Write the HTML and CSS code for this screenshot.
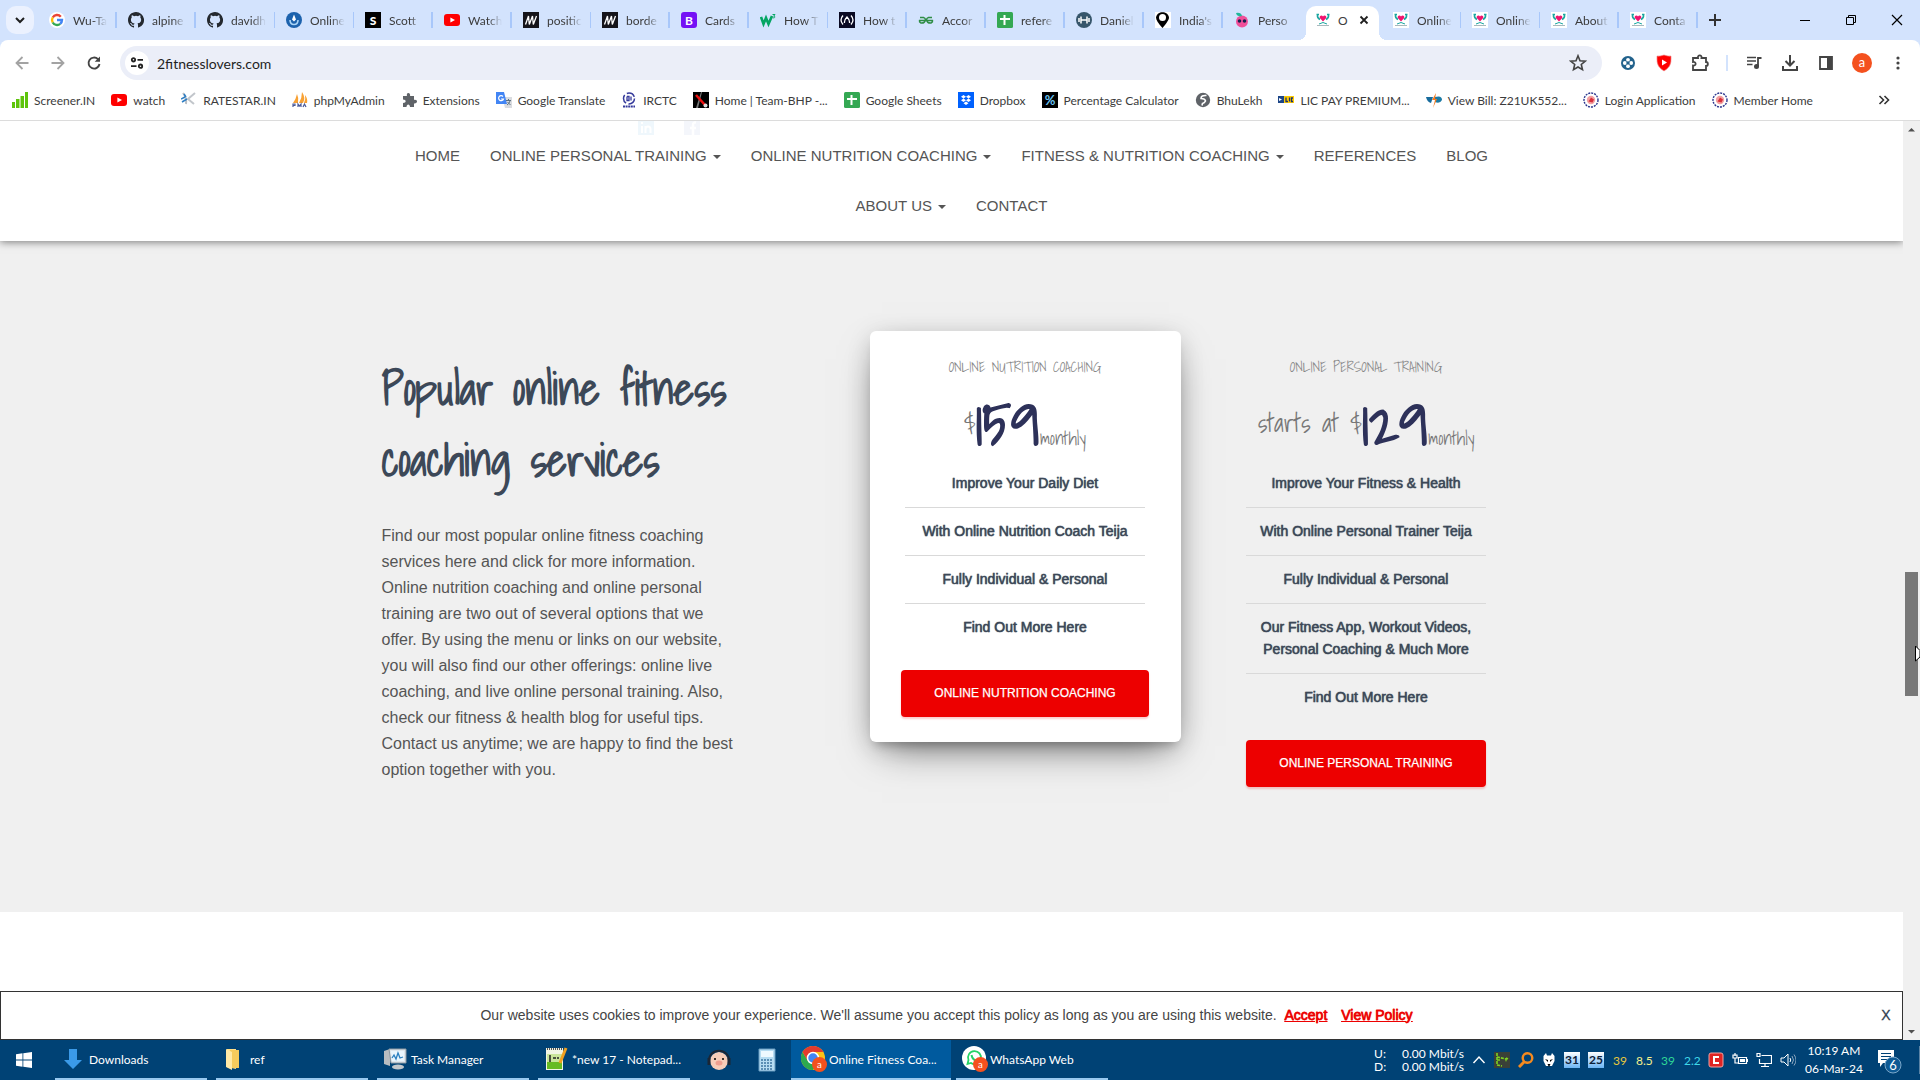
FILE: index.html
```html
<!DOCTYPE html>
<html lang="en">
<head>
<meta charset="utf-8">
<title>Online Fitness Coaching</title>
<link rel="stylesheet" href="styles.css">
</head>
<body>
<svg class="sprite" aria-hidden="true">
  <symbol id="github" viewBox="0 0 16 16"><path fill="#24292f" d="M8 0C3.58 0 0 3.58 0 8c0 3.54 2.29 6.53 5.47 7.59.4.07.55-.17.55-.38v-1.49c-2.01.37-2.53-.49-2.69-.94-.09-.23-.48-.94-.82-1.13-.28-.15-.68-.52-.01-.53.63-.01 1.08.58 1.23.82.72 1.21 1.87.87 2.33.66.07-.52.28-.87.51-1.07-1.78-.2-3.64-.89-3.64-3.95 0-.87.31-1.59.82-2.15-.08-.2-.36-1.02.08-2.12 0 0 .67-.21 2.2.82a7.4 7.4 0 0 1 4 0c1.53-1.04 2.2-.82 2.2-.82.44 1.1.16 1.92.08 2.12.51.56.82 1.27.82 2.15 0 3.07-1.87 3.75-3.65 3.95.29.25.54.73.54 1.48v2.2c0 .21.15.46.55.38A8 8 0 0 0 8 0z"/></symbol>
  <symbol id="youtube" viewBox="0 0 16 16"><rect y="2" width="16" height="12" rx="3" fill="#f00"/><path d="M6.4 5.4v5.2L11 8z" fill="#fff"/></symbol>
  <symbol id="mdn" viewBox="0 0 16 16"><rect width="16" height="16" fill="#15141a"/><path d="M2.500 12.500 5.500 4l.8 8.500L9.500 4l.8 8.500L13.500 4" fill="none" stroke="#fff" stroke-width="1.300"/></symbol>
  <symbol id="sheets" viewBox="0 0 16 16"><rect width="16" height="16" rx="1.500" fill="#34a853"/><path d="M7.500 3v10M3 7h10" stroke="#fff" stroke-width="2"/></symbol>
  <symbol id="lovers" viewBox="0 0 16 16"><path fill="#fff" d="M0 0h16v16H0z"/><path d="M1.500 2.500h2.500M12 2.500h2.500M2.500 3Q2 6 5 7.500M13.500 3Q14 6 11 7.500" fill="none" stroke="#1aa6a0" stroke-width="1.500"/><path d="M8 9.500 4.800 6C4 3.500 7 2.500 8 4.500c1-2 4-1 3.200 1.500z" fill="#f0146e"/><path d="m4 12 4-1.500 4 1.500" fill="none" stroke="#1aa6a0"/><path d="M2 13.500h12" stroke="#a9b8bc"/></symbol>
  <symbol id="seal" viewBox="0 0 16 16"><circle cx="8" cy="8" r="7" fill="#fff" stroke="#28348c" stroke-width="1.400" stroke-dasharray="2 1"/><circle cx="8" cy="8" r="4.200" fill="#f3a0a0"/><path d="M5.500 9.500 8 5.500l3 2-1.500 3z" fill="#d8303c"/></symbol>
  <symbol id="profile" viewBox="0 0 14 14"><circle cx="7" cy="7" r="7" fill="#f4511e"/><text x="7" y="10" text-anchor="middle" font-size="9" fill="#fff">a</text></symbol>
</svg>

<header class="browser">
  <div class="tabstrip">
    <button class="tab-search" aria-label="Search tabs"><svg width="12" height="12" viewBox="0 0 12 12"><path d="m2 4 4 4 4-4" fill="none" stroke="#1f1f1f" stroke-width="2"/></svg></button>
    <button class="tab"><svg class="ico" viewBox="0 0 16 16"><circle cx="8" cy="8" r="8" fill="#fff"/><g fill="none" stroke-width="2.400"><path d="M11.800 4.700A5 5 0 0 0 3.700 5.500" stroke="#ea4335"/><path d="M3.700 5.500a5 5 0 0 0 0 5" stroke="#fbbc05"/><path d="M3.700 10.500a5 5 0 0 0 7.500 1.300" stroke="#34a853"/><path d="M11.200 11.800A5 5 0 0 0 13 8H8" stroke="#4285f4"/></g></svg><span>Wu-Ta</span></button>
    <button class="tab"><svg class="ico"><use href="#github"/></svg><span>alpine</span></button>
    <button class="tab"><svg class="ico"><use href="#github"/></svg><span>davidh</span></button>
    <button class="tab"><svg class="ico" viewBox="0 0 16 16"><circle cx="8" cy="8" r="8" fill="#1c62ad"/><path d="M8 2.500 6 7.500 8 9.500l2-2z" fill="#fff"/><path d="M4 8q0 4.500 4 4.500T12 8" fill="none" stroke="#a9d4f7" stroke-width="1.600"/></svg><span>Online</span></button>
    <button class="tab"><svg class="ico" viewBox="0 0 16 16"><path d="M0 0h16v16H0z"/><text x="8" y="12.500" text-anchor="middle" font-size="12" font-weight="900" fill="#fff">S</text></svg><span>Scott</span></button>
    <button class="tab"><svg class="ico"><use href="#youtube"/></svg><span>Watch</span></button>
    <button class="tab"><svg class="ico"><use href="#mdn"/></svg><span>positic</span></button>
    <button class="tab"><svg class="ico"><use href="#mdn"/></svg><span>borde</span></button>
    <button class="tab"><svg class="ico" viewBox="0 0 16 16"><rect width="16" height="16" rx="3" fill="#7512f5"/><text x="8" y="12.500" text-anchor="middle" font-size="12" font-weight="700" fill="#fff">B</text></svg><span>Cards</span></button>
    <button class="tab"><svg class="ico" viewBox="0 0 16 16"><path d="m1 5 2.500 7L6 6l2.500 6L12 4" fill="none" stroke="#04a563" stroke-width="2.600"/><path d="M12.500 2.500H15l-1.300 1.700c2 0 1.300 2.300-.9 1.500" fill="none" stroke="#04a563"/></svg><span>How T</span></button>
    <button class="tab"><svg class="ico" viewBox="0 0 16 16"><path fill="#0a0a23" d="M0 0h16v16H0z"/><path d="M4 3.500Q0 8 4 12.500M12 3.500q4 4.500 0 9M5.500 11Q5 8 8 5q3 3 2.500 6" fill="none" stroke="#fff" stroke-width="1.300"/></svg><span>How t</span></button>
    <button class="tab"><svg class="ico" viewBox="0 0 16 16"><path d="M2 5.500h3.500Q7.500 6 7.500 8q-1 3.500-4.500 3Q1 10 1.500 8.500h13Q15 10 13 11q-3.500.5-4.500-3 0-2 2-2.500H14" fill="none" stroke="#2f8d46" stroke-width="1.500"/></svg><span>Accor</span></button>
    <button class="tab"><svg class="ico"><use href="#sheets"/></svg><span>refere</span></button>
    <button class="tab"><svg class="ico" viewBox="0 0 16 16"><circle cx="8" cy="8" r="8" fill="#37566b"/><path d="M5 4.500v7M3 6v4M11 4.500v7M13 6v4M5 8h6" stroke="#fff" stroke-width="1.500"/></svg><span>Daniel</span></button>
    <button class="tab"><svg class="ico" viewBox="0 0 16 16"><path fill="#fff" d="M0 0h16v16H0z"/><path d="M7.500 16Q1 9 1 5.500C2-1.500 13-1.500 14 5.500 14 9 7.500 16 7.500 16z"/><circle cx="7.500" cy="5.500" r="3.500" fill="#fff"/></svg><span>India's</span></button>
    <button class="tab"><svg class="ico" viewBox="0 0 16 16"><circle cx="8" cy="9.500" r="6" fill="#f04f9a"/><path d="M2 1q5-1 6 3-5 1-6-3z" fill="#20b89a"/><circle cx="5.500" cy="9" r="1.800" fill="#17214f"/><circle cx="10.500" cy="9" r="1.800" fill="#17214f"/></svg><span>Perso</span></button>
    <button class="tab tab-active"><svg class="ico"><use href="#lovers"/></svg><span>O</span><svg width="10" height="10" viewBox="0 0 10 10"><path d="m1.500 1.500 7 7m0-7-7 7" stroke="#1f1f1f" stroke-width="1.800"/></svg></button>
    <button class="tab"><svg class="ico"><use href="#lovers"/></svg><span>Online</span></button>
    <button class="tab"><svg class="ico"><use href="#lovers"/></svg><span>Online</span></button>
    <button class="tab"><svg class="ico"><use href="#lovers"/></svg><span>About</span></button>
    <button class="tab"><svg class="ico"><use href="#lovers"/></svg><span>Conta</span></button>
    <button class="tab-new" aria-label="New tab"><svg width="12" height="12" viewBox="0 0 12 12"><path d="M6 0v12M0 6h12" stroke="#333" stroke-width="2"/></svg></button>
    <div class="window-controls">
      <button aria-label="Minimize"><svg width="12" height="12" viewBox="0 0 12 12"><path d="M1 6.500h10" stroke="#000"/></svg></button>
      <button aria-label="Restore"><svg width="12" height="12" viewBox="0 0 12 12"><path d="M1.500 3.500h7v7h-7zM3.500 3V1.500h7v7H9" fill="none" stroke="#000"/></svg></button>
      <button aria-label="Close"><svg width="12" height="12" viewBox="0 0 12 12"><path d="m1 1 10 10m0-10L1 11" stroke="#000" stroke-width="1.200"/></svg></button>
    </div>
  </div>

  <div class="panel">
    <div class="toolbar">
      <button class="tool" aria-label="Back"><svg width="16" height="16" viewBox="0 0 16 16"><path d="M14.500 8H3m5.500-6L2.500 8l6 6" fill="none" stroke="#a3a3a3" stroke-width="1.800"/></svg></button>
      <button class="tool" aria-label="Forward"><svg width="16" height="16" viewBox="0 0 16 16"><path d="M1.500 8H13M7.500 2l6 6-6 6" fill="none" stroke="#a3a3a3" stroke-width="1.800"/></svg></button>
      <button class="tool" aria-label="Reload"><svg width="16" height="16" viewBox="0 0 16 16"><path d="M13.500 9A5.500 5.500 0 1 1 12 4.200l1.500 1.500" fill="none" stroke="#444" stroke-width="1.900"/><path d="M14 1.500v5.300H8.700z" fill="#444"/></svg></button>
      <div class="omnibox">
        <button class="site-info" aria-label="Site information"><svg width="14" height="14" viewBox="0 0 14 14"><g fill="none" stroke="#222" stroke-width="1.800"><circle cx="3.500" cy="3.800" r="1.700"/><path d="M7.500 3.800H13M1 10.200h5.500"/><circle cx="10.500" cy="10.200" r="1.700"/></g></svg></button>
        <input aria-label="Address" value="2fitnesslovers.com">
        <svg width="18" height="18" viewBox="0 0 18 18"><path d="m9 1.800 2 4.900 5.300.4-4 3.400 1.200 5.200L9 13l-4.500 2.700 1.200-5.200-4-3.400L7 6.700z" fill="none" stroke="#444" stroke-width="1.600"/></svg>
      </div>
      <div class="tools">
        <button class="tool" aria-label="Extension"><svg width="16" height="16" viewBox="0 0 16 16"><circle cx="8" cy="8" r="7" fill="#22628c"/><g fill="#fff"><circle cx="8" cy="4.800" r="1.900"/><circle cx="8" cy="11.200" r="1.900"/><circle cx="4.800" cy="8" r="1.900"/><circle cx="11.200" cy="8" r="1.900"/></g><circle cx="8" cy="8" r="1.400" fill="#22628c"/></svg></button>
        <button class="tool" aria-label="Video blocker"><svg width="18" height="18" viewBox="0 0 18 18"><path d="M9 1q4 1.500 7 1 .5 7-1.500 10Q12.500 15 9 17q-3.500-2-5.500-5Q1.500 9 2 2q3 .5 7-1z" fill="#f00" stroke="#e88" stroke-width=".6"/><path d="M7 5.500v6L12 8.500z" fill="#fff"/></svg></button>
        <button class="tool" aria-label="Extensions"><svg width="18" height="18" viewBox="0 0 18 18"><path d="M2 4h5c-.8-3.500 4.300-3.500 3.500 0H15v4c2.500 0 2.500 4 0 4v4H2v-4.500c3.500.5 3.500-4 0-3.500z" fill="none" stroke="#444" stroke-width="1.800"/></svg></button>
        <i class="divider"></i>
        <button class="tool" aria-label="Media"><svg width="18" height="18" viewBox="0 0 18 18"><path d="M2 3.500h9M2 7h9M2 10.500h5.500" stroke="#444" stroke-width="1.600"/><path d="M13 12V4h3.500" fill="none" stroke="#444" stroke-width="1.800"/><circle cx="11.500" cy="12.500" r="2.500" fill="#444"/></svg></button>
        <button class="tool" aria-label="Downloads"><svg width="18" height="18" viewBox="0 0 18 18"><path d="M9 1v10M4.500 7 9 11.500 13.500 7M2 12v4h14v-4" fill="none" stroke="#444" stroke-width="2"/></svg></button>
        <button class="tool" aria-label="Side panel"><svg width="16" height="16" viewBox="0 0 16 16"><path d="M2 2h12v12H2z" fill="none" stroke="#444" stroke-width="1.800"/><path d="M9 2h5v12H9z" fill="#444"/></svg></button>
        <button class="tool" aria-label="Profile"><svg width="20" height="20"><use href="#profile"/></svg></button>
        <button class="tool" aria-label="Menu"><svg width="16" height="16" viewBox="0 0 16 16" fill="#444"><circle cx="8" cy="3" r="1.600"/><circle cx="8" cy="8" r="1.600"/><circle cx="8" cy="13" r="1.600"/></svg></button>
      </div>
    </div>

    <nav class="bookmarks" aria-label="Bookmarks">
      <a href="#"><svg class="ico" viewBox="0 0 16 16" fill="#5ec40c"><path d="M0 10h3v6H0zM4 7h3.500v9H4zM8.500 4H12v12H8.500zM13 0h3v16h-3z"/></svg>Screener.IN</a>
      <a href="#"><svg class="ico"><use href="#youtube"/></svg>watch</a>
      <a href="#"><svg class="ico" viewBox="0 0 16 16"><path d="M2 1q4 5 3 11" fill="none" stroke="#b9bec4" stroke-width="2"/><path d="m14 1-7 6 6 5" fill="none" stroke="#c2c6cb" stroke-width="2"/><path d="m0 7 4-2M1 10l5-3M3 2l2 3" stroke="#2f7fc4" stroke-width="1.500"/></svg>RATESTAR.IN</a>
      <a href="#"><svg class="ico" viewBox="0 0 16 16"><path d="M1 11Q4 7 5 2q2 4 1 9zM7 11q3-5 3-11 4 6 1 11zM12 11q2-4 1-8 3 4 2 8z" fill="#f8a133"/><path d="M1 15v-3h2v1.500H1M6 15v-3l1.500 2L9 12v3M11 15l1.500-3 1.500 3" fill="none" stroke="#4a5a99" stroke-width="1.200"/></svg>phpMyAdmin</a>
      <a href="#"><svg class="ico" viewBox="0 0 16 16"><path d="M2 4h4c-1.200-4 4-4 3 0h4v4c4-1 4 4 0 3.500V15H9c0-3.500-3.500-3.500-3.500 0H2v-4c3.500 0 3.500-3.500 0-3.500z" fill="#5f6368"/></svg>Extensions</a>
      <a href="#"><svg class="ico" viewBox="0 0 16 16"><path fill="#dadce0" d="M6 5h10v11H9z"/><path fill="#4285f4" d="M0 0h8l3 12H0z"/><path d="M7 4.500A2.500 2.500 0 1 0 7.500 7H5" fill="none" stroke="#fff" stroke-width="1.200"/><path d="M10 8.500h5M12.500 7v1.500M14 9q-1 3-3 4m.5-3 3 3" fill="none" stroke="#5c7080"/></svg>Google Translate</a>
      <a href="#"><svg class="ico" viewBox="0 0 16 16"><circle cx="8" cy="6.500" r="5.500" fill="none" stroke="#353a9b" stroke-width="1.500" stroke-dasharray="9 2.500"/><path d="M6 4.500v4h2v-4H6m4 0v4" fill="none" stroke="#353a9b" stroke-width="1.300"/><path d="M2 14.500h12" stroke="#353a9b" stroke-width="2" stroke-dasharray="2 .6"/></svg>IRCTC</a>
      <a href="#"><svg class="ico" viewBox="0 0 16 16"><path d="M0 0h16v16H0z"/><path d="M3 16 8 0h1L5 16z" fill="#777"/><path d="m3 3 9 10" stroke="#e11" stroke-width="2.500"/><circle cx="12.500" cy="13.500" r="2" fill="#ddd"/></svg>Home | Team-BHP -...</a>
      <a href="#"><svg class="ico"><use href="#sheets"/></svg>Google Sheets</a>
      <a href="#"><svg class="ico" viewBox="0 0 16 16"><path fill="#0061fe" d="M0 0h16v16H0z"/><path fill="#fff" d="M5.500 3 8 4.700 5.500 6.400 3 4.700zM10.500 3 13 4.700l-2.500 1.700L8 4.700zM5.500 6.500 8 8.200 5.500 9.900 3 8.200zM10.500 6.500 13 8.200l-2.500 1.700L8 8.200zM8 9.500l2.500 1.700L8 13l-2.500-1.800z"/></svg>Dropbox</a>
      <a href="#"><svg class="ico" viewBox="0 0 16 16"><path d="M0 0h16v16H0z"/><text x="8" y="12.500" text-anchor="middle" font-size="13" font-weight="700" fill="#6cc5f5">%</text></svg>Percentage Calculator</a>
      <a href="#"><svg class="ico" viewBox="0 0 16 16"><circle cx="8" cy="8" r="7.200" fill="#5f6368"/><path d="M11.500 3.500Q6 3 6 6.500 10 6.500 10.500 9q-1 2-3 2.500l-.5 2" fill="none" stroke="#fff" stroke-width="1.600"/></svg>BhuLekh</a>
      <a href="#"><svg class="ico" viewBox="0 0 16 16"><path fill="#1c4587" d="M0 4h16v7H0z"/><path fill="#fc0" d="M6 4h10v7H6z"/><path d="M8 5.500V9.500h2M11.500 5.500v4M15 6h-1.500v3.500H15" fill="none" stroke="#1c3070" stroke-width="1.300"/><path d="M1 6l3 1.500L1 9" fill="#fff"/></svg>LIC PAY PREMIUM...</a>
      <a href="#"><svg class="ico" viewBox="0 0 16 16"><path d="M0 5h7L5 11Q1 10 0 5z" fill="#176b9c"/><path d="M9 5q7-2 7 3-2 4-7 2z" fill="#1b7ba5"/><path d="M10 1 6 8h3l-2 8 4-9H9z" fill="#f47a20"/></svg>View Bill: Z21UK552...</a>
      <a href="#"><svg class="ico"><use href="#seal"/></svg>Login Application</a>
      <a href="#"><svg class="ico"><use href="#seal"/></svg>Member Home</a>
      <button class="more" aria-label="More bookmarks"><svg width="12" height="12" viewBox="0 0 12 12"><path d="m1.500 2 4 4-4 4m5-8 4 4-4 4" fill="none" stroke="#333" stroke-width="1.600"/></svg></button>
    </nav>
  </div>
</header>

<div class="viewport">
  <div class="page">
    <header class="site-header">
      <div class="social">
        <svg width="16" height="14" viewBox="0 0 16 14"><path d="M0 0h16v14H0z" fill="#eff7fc"/><path d="M4 5v7M4 1v2M7.500 12V5m0 3q0-2.500 2.500-2.500T12.500 8v4" fill="none" stroke="#fff" stroke-width="2"/></svg>
        <svg width="16" height="14" viewBox="0 0 16 14"><path d="M0 0h16v14H0z" fill="#f4f6fb"/><path d="M12 1.500q-3-.5-3 2.500v10M6 7h6" fill="none" stroke="#fff" stroke-width="2.500"/></svg>
      </div>
      <nav class="menu" aria-label="Main">
        <a href="#">HOME</a>
        <a href="#" class="drop">ONLINE PERSONAL TRAINING</a>
        <a href="#" class="drop">ONLINE NUTRITION COACHING</a>
        <a href="#" class="drop">FITNESS &amp; NUTRITION COACHING</a>
        <a href="#">REFERENCES</a>
        <a href="#">BLOG</a>
        <a href="#" class="drop">ABOUT US</a>
        <a href="#">CONTACT</a>
      </nav>
    </header>
    <main class="services">
      <div class="container">
        <section class="intro">
          <h2>Popular online fitness coaching services</h2>
          <p>Find our most popular online fitness coaching services here and click for more information. Online nutrition coaching and online personal training are two out of several options that we offer. By using the menu or links on our website, you will also find our other offerings: online live coaching, and live online personal training. Also, check our fitness &amp; health blog for useful tips. Contact us anytime; we are happy to find the best option together with you.</p>
        </section>
        <div class="plans">
          <article class="plan plan-raised">
            <h6>ONLINE NUTRITION COACHING</h6>
            <p class="price"><small class="before">$</small><strong>159</strong><small>monthly</small></p>
            <ul>
              <li>Improve Your Daily Diet</li>
              <li>With Online Nutrition Coach Teija</li>
              <li>Fully Individual &amp; Personal</li>
              <li>Find Out More Here</li>
            </ul>
            <a class="btn" href="#">ONLINE NUTRITION COACHING</a>
          </article>
          <article class="plan">
            <h6>ONLINE PERSONAL TRAINING</h6>
            <p class="price"><small class="before">starts at $</small><strong>129</strong><small>monthly</small></p>
            <ul>
              <li>Improve Your Fitness &amp; Health</li>
              <li>With Online Personal Trainer Teija</li>
              <li>Fully Individual &amp; Personal</li>
              <li>Our Fitness App, Workout Videos, Personal Coaching &amp; Much More</li>
              <li>Find Out More Here</li>
            </ul>
            <a class="btn" href="#">ONLINE PERSONAL TRAINING</a>
          </article>
        </div>
      </div>
    </main>
    <aside class="cookies">
      <p>Our website uses cookies to improve your experience. We'll assume you accept this policy as long as you are using this website. <a href="#">Accept</a> <a href="#">View Policy</a></p>
      <button aria-label="Dismiss">X</button>
    </aside>
  </div>
  <div class="scrollbar">
    <svg width="17" height="17" viewBox="0 0 17 17"><path d="M5 10.500 8.500 7l3.500 3.500z" fill="#505050"/></svg>
    <div class="track"><div class="thumb"></div></div>
    <svg width="17" height="17" viewBox="0 0 17 17"><path d="m5 7 3.500 3.500L12 7z" fill="#505050"/></svg>
    <svg class="cursor" width="5" height="18" viewBox="0 0 5 18"><path d="M.5 1v15L5 12V5.500z" fill="#fff" stroke="#000"/></svg>
  </div>
</div>

<footer class="taskbar">
  <button class="start" aria-label="Start"><svg width="16" height="16" viewBox="0 0 16 16" fill="#fff"><path d="M0 2.200 6.500 1.300v6.300H0zM7.300 1.200 16 0v7.600H7.300zM0 8.400h6.500v6.300L0 13.800zM7.300 8.400H16V16l-8.700-1.200z"/></svg></button>
  <button class="task"><svg width="26" height="24" viewBox="0 0 26 24"><path d="M8 2h8v11h5l-9 9-9-9h5z" fill="#3b9ae8"/></svg>Downloads</button>
  <button class="task"><svg width="26" height="24" viewBox="0 0 26 24"><path d="M5 2h9v20l-9-2z" fill="#ffe08a"/><path d="M8 3h9v18H8z" fill="#f6cb5c"/><path d="m4 2 6 3v18l-6-3z" fill="#ffe9a6"/></svg>ref</button>
  <button class="task"><svg width="26" height="24" viewBox="0 0 26 24"><path d="m1 4 6-2v17l-6-2z" fill="#b8bcc0"/><path d="M6 2h17v14H8z" fill="#dfe6ec" stroke="#8c98a2"/><path d="M8 4h13v10H9z" fill="#e9f5fd"/><path d="m9 11 2-3 2 4 2-6 2 5 3-1" fill="none" stroke="#2a7fc0" stroke-width="1.300"/><ellipse cx="15" cy="20" rx="6" ry="2.500" fill="#c3c8cc"/></svg>Task Manager</button>
  <button class="task"><svg width="26" height="24" viewBox="0 0 26 24"><path d="M2 1h17v22H2z" fill="#f1f5e4"/><path d="M3 14h15v8H3z" fill="#66bb22"/><path d="M3 7h15v8H3z" fill="#c9e59a"/><path d="M3 2h15" stroke="#555" stroke-dasharray="1 1" stroke-width="2"/><path d="M6 8v7M9 11h3m1 0h2" stroke="#222" stroke-width="1.500"/><path d="m22 1-6 15" stroke="#f0a020" stroke-width="3"/></svg>*new 17 - Notepad...</button>
  <button class="pin" aria-label="Player"><svg width="24" height="24" viewBox="0 0 24 24"><circle cx="12" cy="13" r="9" fill="#f7cdb9"/><path d="M2 14C1-1 23-1 22 14" fill="none" stroke="#1b2635" stroke-width="2"/><path d="M2 10v7M22 10v7" stroke="#1b2635" stroke-width="3"/><ellipse cx="12" cy="15" rx="3.500" ry="2.500" fill="#ee9f90"/><circle cx="8" cy="11" r="1"/><circle cx="16" cy="11" r="1"/></svg></button>
  <button class="pin" aria-label="Calculator"><svg width="18" height="24" viewBox="0 0 18 24"><path d="M1 1h16v22H1z" fill="#b6dcf2" stroke="#679bc0"/><path d="M3 3h12v6H3z" fill="#eef9ff"/><path d="M3 12h12M3 15h12M3 18h12M3 21h12" stroke="#5b8fb5" stroke-width="2" stroke-dasharray="2 1"/></svg></button>
  <button class="task task-active"><svg width="26" height="26" viewBox="0 0 26 26"><circle cx="12" cy="12" r="12" fill="#fbc116"/><path d="M1.600 6A12 12 0 0 0 12 24l5-9H7z" fill="#2da94f"/><path d="M12 6h10.400A12 12 0 0 0 1.600 6l5.200 9z" fill="#e33b2e"/><circle cx="12" cy="12" r="5.500" fill="#4285f4" stroke="#fff" stroke-width="1.500"/><use href="#profile" x="11" y="11" width="15" height="15"/></svg>Online Fitness Coa...</button>
  <button class="task"><svg width="26" height="26" viewBox="0 0 26 26"><circle cx="12" cy="12" r="12" fill="#fff"/><path d="m5.500 18 1-4a6.500 6.500 0 1 1 2.500 3z" fill="none" stroke="#25d366" stroke-width="1.800"/><path d="M9.500 9q1 5 5.500 6" fill="none" stroke="#25d366" stroke-width="2"/><use href="#profile" x="11" y="11" width="15" height="15"/></svg>WhatsApp Web</button>
  <div class="tray">
    <div class="net"><span>U:</span><span>0.00 Mbit/s</span><span>D:</span><span>0.00 Mbit/s</span></div>
    <svg width="14" height="16" viewBox="0 0 14 16"><path d="m1.500 11 5.500-6 5.500 6" fill="none" stroke="#fff" stroke-width="1.400"/></svg>
    <svg width="16" height="16" viewBox="0 0 16 16"><path fill="#3a4038" d="M0 0h16v16H0z"/><path d="M3 1v4l9 2v3M3 5v8M3 13l5 1M3 8h3M12 6l2 1" fill="none" stroke="#7ed321" stroke-width="1.600" stroke-dasharray="3 1"/></svg>
    <svg width="16" height="16" viewBox="0 0 16 16"><circle cx="9.500" cy="6" r="4.800" fill="none" stroke="#f58a1f" stroke-width="2.400"/><path d="m6 10-5 5" stroke="#f58a1f" stroke-width="3"/></svg>
    <svg width="14" height="16" viewBox="0 0 14 16"><path d="M1.500 4 4 1l1 2.500h4L10 1l2.500 3v5L10 14H4L1.500 9z" fill="#fff"/><path d="m3 7 3 1v2zm8 0-3 1v2zM5.500 12h3l-1.500 3z"/></svg>
    <b class="day">31</b>
    <b class="day">25</b>
    <span class="temp gold">39</span>
    <span class="temp pale">8.5</span>
    <span class="temp green">39</span>
    <span class="temp cyan">2.2</span>
    <svg width="16" height="16" viewBox="0 0 16 16"><rect x="1" y="1" width="14" height="14" rx="2" fill="#e02424" stroke="#f4a0a0"/><path d="M11 5H6v6h5" fill="none" stroke="#fff" stroke-width="2"/></svg>
    <svg width="16" height="16" viewBox="0 0 16 16"><path d="M6.500 5.500h8v6h-8zM15.500 7v3M3 1v3M1 3h4v3H1zM3 6v5h3" fill="none" stroke="#fff" stroke-width="1.200"/><path fill="#fff" d="M8 7h5v3H8z"/></svg>
    <svg width="16" height="16" viewBox="0 0 16 16"><path d="M5.500 3.500h10v8H3.500V7M1 1.500h3v3H1zM9 12v2.500M5 14.500h8" fill="none" stroke="#fff" stroke-width="1.200"/></svg>
    <svg width="16" height="16" viewBox="0 0 16 16"><path d="M1 6h3l4-4v12l-4-4H1z" fill="none" stroke="#fff"/><path d="M10 6q1.500 2 0 4" fill="none" stroke="#fff"/><path d="M12 4q3 4 0 8M14 2.500q4 5.500 0 11" fill="none" stroke="#8ba6bf"/></svg>
    <div class="clock"><span>10:19 AM</span><span>06-Mar-24</span></div>
    <button class="notes" aria-label="Notifications"><svg width="26" height="28" viewBox="0 0 26 28"><path d="M2 4h16v13H7l-3 4v-4H2z" fill="#fff"/><path d="M5 7.500h10M5 10.500h10M5 13.500h6" stroke="#004275"/><circle cx="17" cy="19" r="8" fill="#0e5a94" stroke="#7ba7c9"/><text x="17" y="23.500" text-anchor="middle" font-size="13" fill="#fff">6</text></svg></button>
  </div>
</footer>
</body>
</html>
```
FILE: styles.css
```css
* { box-sizing: border-box; }
body { margin: 0; height: 100vh; display: flex; flex-direction: column; overflow: hidden; font-family: "Segoe UI", Lato, sans-serif; font-size: 12px; color: #3c3c3c; }
button { border: 0; padding: 0; background: none; font: inherit; color: inherit; display: flex; align-items: center; justify-content: center; }
a { color: inherit; text-decoration: none; }
svg { flex: none; display: block; }
h2, h6, p, ul { margin: 0; padding: 0; }
.sprite { display: none; }
.ico { width: 16px; height: 16px; }

/* Browser frame */
.browser { background: #d3e3fd; flex: none; }
.tabstrip { display: flex; height: 40px; }
.tab-search { width: 28px; height: 28px; margin: 6px 4px 0 6px; border-radius: 10px; background: #ebf1fe; }
.tab { flex: none; width: 79px; padding-left: 11px; gap: 8px; justify-content: flex-start; }
.tab span { width: 35px; white-space: nowrap; text-align: left; mask-image: linear-gradient(90deg, #000 60%, transparent); }
.tab::after { content: ""; width: 2px; height: 16px; margin-left: auto; background: #a8c7fa; }
.tab-active { position: relative; width: 73px; margin: 6px 3px 0 4px; padding: 0 0 6px 9px; gap: 7px; border-radius: 10px 10px 0 0; background: #fff; }
.tab-active span { width: 14px; mask-image: none; }
.tab-active::after, .tab-active::before { content: ""; position: absolute; bottom: 0; width: 8px; height: 8px; }
.tab-active::before { right: 100%; background: radial-gradient(circle at 0 0, transparent 8px, #fff 8px); }
.tab-active::after { left: 100%; background: radial-gradient(circle at 100% 0, transparent 8px, #fff 8px); }
.tab:has(+ .tab-active)::after { display: none; }
.tab-new { width: 34px; }
.window-controls { display: flex; margin-left: auto; }
.window-controls button { width: 46px; }
.panel { background: #fff; border-radius: 8px 8px 0 0; padding-top: 6px; border-bottom: 1px solid #dcdcdc; }
.toolbar { display: flex; height: 34px; padding-left: 4px; }
.tool { width: 36px; }
.omnibox { flex: 1; margin-left: 8px; display: flex; align-items: center; gap: 8px; padding: 0 15px 0 5px; border-radius: 17px; background: #ebeef8; }
.site-info { width: 24px; height: 24px; border-radius: 12px; background: #fff; }
.omnibox input { flex: 1; border: 0; padding: 0; background: none; font: inherit; font-size: 14px; color: #1f1f1f; }
.tools { display: flex; align-items: center; margin-left: 8px; padding-right: 4px; }
.tools .tool { height: 34px; }
.divider { width: 2px; height: 16px; margin: 0 8px; background: #d3e3fd; }
.bookmarks { display: flex; align-items: center; gap: 16px; height: 40px; padding: 0 30px 0 12px; }
.bookmarks a { display: flex; align-items: center; gap: 6px; white-space: nowrap; }
.more { margin-left: auto; }

/* Web page */
.viewport { flex: 1; min-height: 0; display: flex; }
.page { flex: 1; display: flex; flex-direction: column; min-width: 0; overflow: hidden; background: #fff; font-family: "Liberation Sans", Arial, sans-serif; }
.site-header { position: relative; z-index: 1; padding: 10px 0; background: #fff; box-shadow: 0 1px 8px rgba(0, 0, 0, .5); }
.social { position: absolute; top: 0; left: 638px; display: flex; gap: 30px; }
.menu { position: relative; max-width: 1170px; margin: 0 auto; display: flex; flex-wrap: wrap; justify-content: center; }
.menu a { padding: 0 15px; font-size: 15px; line-height: 50px; color: #555; white-space: nowrap; }
.drop::after { content: ""; display: inline-block; margin-left: 6px; vertical-align: 2px; border: 4px solid transparent; border-top-color: #555; border-bottom: 0; }
.services { padding: 90px 0 100px; background: #f0f0f0; }
.container { max-width: 1140px; margin: 0 auto; display: grid; grid-template-columns: 360px 652px; justify-content: space-between; }
.intro { padding-top: 22px; }
.intro h2, .plan h6, .price { font-family: "Shadows Into Light", "Roboto Condensed", Roboto, sans-serif; }
.intro h2 { margin-bottom: 28px; font-size: 44px; font-weight: 700; line-height: 71px; color: #3c4858; }
.intro p { font-size: 16px; line-height: 26px; color: #555; }
.plans { display: grid; grid-template-columns: 1fr 1fr; gap: 30px; align-items: start; }
.plan { display: flex; flex-direction: column; align-items: center; padding: 25px 0; border-radius: 6px; text-align: center; }
.plan-raised { background: #fff; box-shadow: 0 16px 38px -12px rgba(0, 0, 0, .56), 0 4px 25px rgba(0, 0, 0, .12), 0 8px 10px -5px rgba(0, 0, 0, .2); }
.plan h6 { font-size: 14px; font-weight: 400; line-height: 22px; color: #888; }
.price { display: flex; align-items: baseline; height: 82px; }
.price strong { font-size: 60px; font-weight: 700; line-height: 90px; color: #2d3159; }
.price small { font-size: 18px; color: #777; }
.price .before { align-self: flex-start; font-size: 26px; line-height: 88px; }
.plan ul { width: 240px; list-style: none; }
.plan li { padding: 12px 0 13px; border-bottom: 1px solid #d9d9d9; font-size: 14px; line-height: 22px; color: #3c4858; text-shadow: 0 0 1px #3c4858; -webkit-text-stroke: thin #3c4858; }
.plan li:last-child { border-bottom: 0; }
.btn { min-width: 240px; margin-top: 19px; padding: 0 33px; border-radius: 4px; background: #ed0000; box-shadow: 0 2px 2px rgba(237, 0, 0, .2); font-size: 12px; line-height: 47px; color: #fff; -webkit-text-stroke: thin #fff; }
.cookies { display: flex; align-items: center; height: 49px; margin-top: auto; padding: 0 10px 2px 12px; border: 1px solid #333; background: #fff; font-size: 14px; color: #444; }
.cookies p { flex: 1; text-align: center; }
.cookies a { margin-left: 4px; text-decoration: underline; color: #ed0000; text-shadow: 0 0 1px #ed0000; -webkit-text-stroke: thin #ed0000; }
.cookies a + a { margin-left: 10px; }
.cookies button { width: 12px; color: #333f50; -webkit-text-stroke: thin #333f50; }
.scrollbar { position: relative; width: 17px; display: flex; flex-direction: column; background: #f0f0f0; }
.track { flex: 1; }
.thumb { width: 13px; height: 14%; margin: 434px auto 0; background: #787878; }
.cursor { position: absolute; right: 0; top: 524px; }

/* Taskbar */
.taskbar { flex: none; display: flex; height: 40px; background: #004275; color: #fff; }
.start { width: 48px; margin-right: 7px; }
.task { width: 152px; margin-right: 9px; padding-left: 6px; gap: 2px; justify-content: flex-start; white-space: nowrap; border-bottom: 2px solid #99c9ef; }
.task-active { width: 160px; margin-right: 5px; padding-left: 10px; background: #005a9e; }
.pin { width: 48px; }
.task + .pin { margin-left: -4px; }
.tray { margin-left: auto; display: flex; align-items: center; gap: 8px; }
.net { display: grid; grid-template-columns: 28px auto; line-height: 13px; }
.day { width: 16px; height: 16px; background: linear-gradient(#fff, #6bb5f5); color: #0c2038; line-height: 16px; text-align: center; }
.temp { width: 16px; text-align: center; }
.gold { color: #e8c93c; }
.pale { color: #f5f08c; }
.green { color: #2fd897; }
.cyan { color: #3fd8e8; }
.clock { display: flex; flex-direction: column; width: 60px; line-height: 18px; text-align: center; }
.notes { width: 48px; padding-left: 4px; justify-content: flex-start; border-right: 1px solid #5a83a5; }
```
